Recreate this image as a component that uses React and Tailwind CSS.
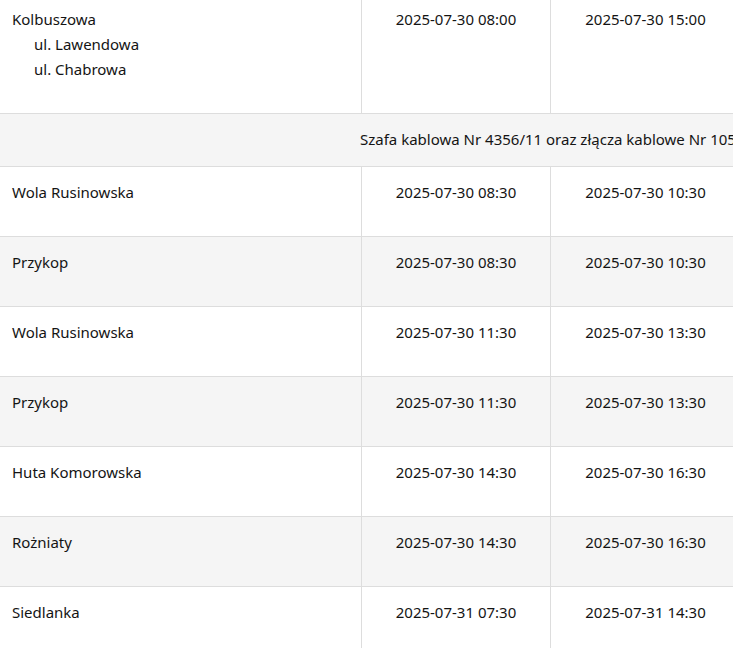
const rows = [
  { place: "Wola Rusinowska", from: "2025-07-30 08:30", to: "2025-07-30 10:30" },
  { place: "Przykop", from: "2025-07-30 08:30", to: "2025-07-30 10:30" },
  { place: "Wola Rusinowska", from: "2025-07-30 11:30", to: "2025-07-30 13:30" },
  { place: "Przykop", from: "2025-07-30 11:30", to: "2025-07-30 13:30" },
  { place: "Huta Komorowska", from: "2025-07-30 14:30", to: "2025-07-30 16:30" },
  { place: "Rożniaty", from: "2025-07-30 14:30", to: "2025-07-30 16:30" },
  { place: "Siedlanka", from: "2025-07-31 07:30", to: "2025-07-31 14:30" },
];

function Row({ children, from, to, gray }) {
  return (
    <div className={`grid grid-cols-[362px_189px_189px] border-b border-[#dddddd] ${gray ? "bg-[#f5f5f5]" : "bg-white"}`}>
      <div className="border-r border-[#dddddd] pl-3 pt-[13px] pb-[31px]">{children}</div>
      <div className="border-r border-[#dddddd] text-center pt-[13px]">{from}</div>
      <div className="text-center pt-[13px]">{to}</div>
    </div>
  );
}

export default function App() {
  return (
    <div className="w-[733px] h-[648px] overflow-hidden bg-white text-[15px] leading-[25px] text-[#141414] font-['Noto_Sans',sans-serif]">
      <div className="w-[740px] -mt-[6px]">
        <Row from="2025-07-30 08:00" to="2025-07-30 15:00">
          <div>Kolbuszowa</div>
          <div className="pl-[22px]">ul. Lawendowa</div>
          <div className="pl-[22px]">ul. Chabrowa</div>
        </Row>
        <div className="bg-[#f5f5f5] border-b border-[#dddddd] pl-[360px] pt-[13px] pb-[14px] whitespace-nowrap">
          Szafa kablowa Nr 4356/11 oraz złącza kablowe Nr 1052/11, 1053/11
        </div>
        {rows.map((r, i) => (
          <Row key={i} from={r.from} to={r.to} gray={i % 2 === 1}>
            {r.place}
          </Row>
        ))}
      </div>
    </div>
  );
}
